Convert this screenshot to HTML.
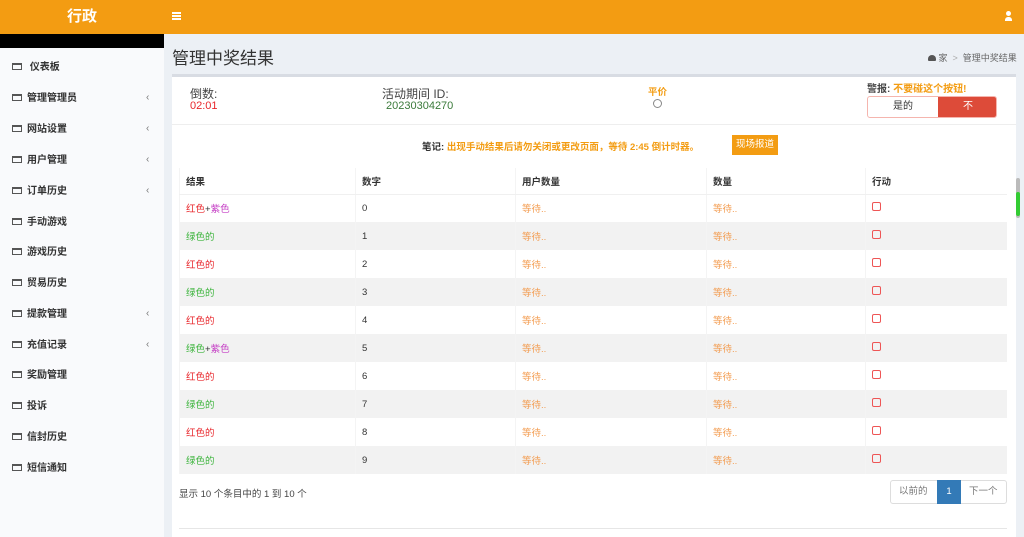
<!DOCTYPE html>
<html><head><meta charset="utf-8"><style>
*{margin:0;padding:0;box-sizing:border-box}
html,body{width:1024px;height:537px;overflow:hidden}
body{font-family:"Liberation Sans","Noto Sans CJK SC",sans-serif;background:#ecf0f5;position:relative;font-size:10px;color:#333}
.hdr{position:absolute;left:0;top:0;width:1024px;height:34px;background:#f39c12}
.logo{position:absolute;left:0;top:0;width:164px;height:34px;color:#fff;font-weight:bold;font-size:15px;text-align:center;line-height:34px}
.side{position:absolute;left:0;top:34px;width:164px;height:503px;background:#f9fafc}
.blk{height:14px;background:#000}
.it{position:absolute;left:12px;font-size:10px;font-weight:bold;color:#333;height:14px;line-height:14px}
.ic{display:inline-block;width:10px;height:7px;border:1.5px solid #555;border-top-width:2.5px;margin-right:5px;vertical-align:middle;position:relative;top:-1px}
.ch{position:absolute;left:146px;color:#777;font-size:10px}
.box{position:absolute;left:172px;top:74px;width:844px;height:470px;background:#fff;border-top:3px solid #d8dce3}
.a{position:absolute}
table{position:absolute;left:179px;top:168px;width:828px;border-collapse:collapse;font-size:9.5px}
td,th{height:28px;padding-left:6px;text-align:left;border-left:1px solid #f4f4f4}
th{height:26px;font-weight:bold;font-size:9.5px;border-bottom:1px solid #f0f0f0;background:#fff}
tr:nth-child(odd) td{background:#f2f2f2}
.r{color:#e8262b}.g{color:#3cb43c}.p{color:#c43cc4}.o{color:#f39c50}
.cb{display:inline-block;width:9px;height:9px;border:1.2px solid #e55;border-radius:2px}
</style></head><body>
<div class="hdr"><div class="logo">行政</div>
<div class="a" style="left:172px;top:12px;width:9px;height:8px;border-top:2px solid #fff;border-bottom:2px solid #fff"><div style="margin-top:1px;height:2px;background:#fff"></div></div>
<div class="a" style="left:1005px;top:11px;width:7px;height:10px"><div style="width:5px;height:5px;border-radius:50%;background:#fff;margin-left:1px"></div><div style="width:7px;height:4px;background:#fff;border-radius:3px 3px 0 0;margin-top:1px"></div></div>
</div>
<div class="side"><div class="blk"></div></div>
<div class="it" style="top:61px"><span class="ic"></span>&nbsp;仪表板</div>
<div class="it" style="top:92px"><span class="ic"></span>管理管理员</div><div class="ch" style="top:92px">‹</div>
<div class="it" style="top:123px"><span class="ic"></span>网站设置</div><div class="ch" style="top:123px">‹</div>
<div class="it" style="top:154px"><span class="ic"></span>用户管理</div><div class="ch" style="top:154px">‹</div>
<div class="it" style="top:185px"><span class="ic"></span>订单历史</div><div class="ch" style="top:185px">‹</div>
<div class="it" style="top:216px"><span class="ic"></span>手动游戏</div>
<div class="it" style="top:246px"><span class="ic"></span>游戏历史</div>
<div class="it" style="top:277px"><span class="ic"></span>贸易历史</div>
<div class="it" style="top:308px"><span class="ic"></span>提款管理</div><div class="ch" style="top:308px">‹</div>
<div class="it" style="top:339px"><span class="ic"></span>充值记录</div><div class="ch" style="top:339px">‹</div>
<div class="it" style="top:369px"><span class="ic"></span>奖励管理</div>
<div class="it" style="top:400px"><span class="ic"></span>投诉</div>
<div class="it" style="top:431px"><span class="ic"></span>信封历史</div>
<div class="it" style="top:462px"><span class="ic"></span>短信通知</div>
<div class="a" style="left:172px;top:44px;font-size:17px;color:#333">管理中奖结果</div>
<div class="a" style="left:928px;top:51px;font-size:9px;color:#666"><span style="display:inline-block;width:8px;height:6px;background:#555;border-radius:4px 4px 1px 1px"></span> 家 &nbsp;<span style="color:#aaa">&gt;</span>&nbsp; 管理中奖结果</div>
<div class="box"></div>
<div class="a" style="left:190px;top:85px;font-size:12px;color:#444">倒数:</div>
<div class="a" style="left:190px;top:100px;font-size:11px;color:#e8262b">02:01</div>
<div class="a" style="left:382px;top:85px;font-size:12px;color:#444">活动期间 ID:</div>
<div class="a" style="left:386px;top:100px;font-size:11px;color:#3a7a3a">20230304270</div>
<div class="a" style="left:648px;top:84px;font-size:9.5px;font-weight:bold;color:#f39c12">平价</div>
<div class="a" style="left:653px;top:99px;width:9px;height:9px;border:1px solid #888;border-radius:50%"></div>
<div class="a" style="left:867px;top:80px;font-size:10px;font-weight:bold;color:#444">警报: <span style="color:#f39c12">不要碰这个按钮!</span></div>
<div class="a" style="left:867px;top:96px;width:130px;height:22px;border:1px solid #f5b5ae;border-radius:3px;overflow:hidden;font-size:10px"><div class="a" style="left:0;top:0;width:70px;height:20px;line-height:20px;text-align:center;color:#333">是的</div><div class="a" style="left:70px;top:0;width:60px;height:20px;line-height:20px;text-align:center;background:#dd4b39;color:#fff">不</div></div>
<div class="a" style="left:172px;top:124px;width:844px;height:1px;background:#eee"></div>
<div class="a" style="left:422px;top:139px;font-size:9.5px;font-weight:bold;color:#333">笔记: <span style="color:#f39c12">出现手动结果后请勿关闭或更改页面，等待 2:45 倒计时器。</span></div>
<div class="a" style="left:732px;top:135px;width:46px;height:20px;background:#f39c12;color:#fff;font-size:9.5px;line-height:20px;text-align:center">现场报道</div>
<table>
<tr><th style="width:176px">结果</th><th style="width:160px">数字</th><th style="width:191px">用户数量</th><th style="width:159px">数量</th><th>行动</th></tr>
<tr><td><span class="r">红色</span>+<span class="p">紫色</span></td><td>0</td><td class="o">等待..</td><td class="o">等待..</td><td><span class="cb"></span></td></tr>
<tr><td class="g">绿色的</td><td>1</td><td class="o">等待..</td><td class="o">等待..</td><td><span class="cb"></span></td></tr>
<tr><td class="r">红色的</td><td>2</td><td class="o">等待..</td><td class="o">等待..</td><td><span class="cb"></span></td></tr>
<tr><td class="g">绿色的</td><td>3</td><td class="o">等待..</td><td class="o">等待..</td><td><span class="cb"></span></td></tr>
<tr><td class="r">红色的</td><td>4</td><td class="o">等待..</td><td class="o">等待..</td><td><span class="cb"></span></td></tr>
<tr><td><span class="g">绿色</span>+<span class="p">紫色</span></td><td>5</td><td class="o">等待..</td><td class="o">等待..</td><td><span class="cb"></span></td></tr>
<tr><td class="r">红色的</td><td>6</td><td class="o">等待..</td><td class="o">等待..</td><td><span class="cb"></span></td></tr>
<tr><td class="g">绿色的</td><td>7</td><td class="o">等待..</td><td class="o">等待..</td><td><span class="cb"></span></td></tr>
<tr><td class="r">红色的</td><td>8</td><td class="o">等待..</td><td class="o">等待..</td><td><span class="cb"></span></td></tr>
<tr><td class="g">绿色的</td><td>9</td><td class="o">等待..</td><td class="o">等待..</td><td><span class="cb"></span></td></tr>
</table>
<div class="a" style="left:179px;top:486px;font-size:9.5px;color:#444">显示 10 个条目中的 1 到 10 个</div>
<div class="a" style="left:890px;top:480px;width:117px;height:24px;border:1px solid #ddd;border-radius:3px;font-size:9.5px;color:#777;line-height:22px"><span class="a" style="left:8px;top:0">以前的</span><div class="a" style="left:46px;top:-1px;width:24px;height:24px;background:#337ab7;color:#fff;text-align:center;line-height:24px">1</div><span class="a" style="left:78px;top:0">下一个</span></div>
<div class="a" style="left:179px;top:528px;width:828px;height:1px;background:#e6e6e6"></div>
<div class="a" style="left:1016px;top:178px;width:4px;height:40px;background:#bbb;border-radius:2px"></div>
<div class="a" style="left:1016px;top:192px;width:4px;height:24px;background:#3c3;border-radius:2px"></div>
</body></html>
